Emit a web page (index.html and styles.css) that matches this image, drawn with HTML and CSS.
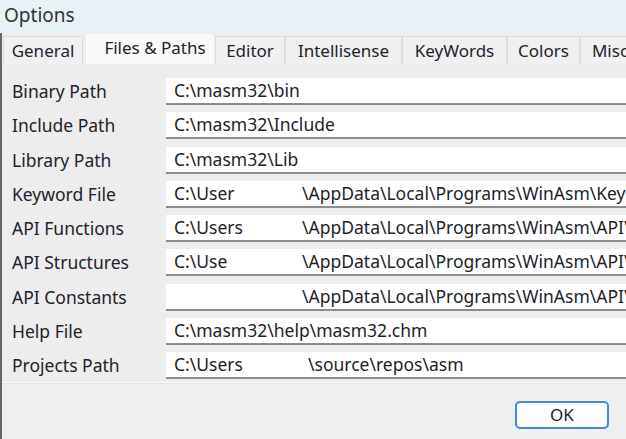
FILE: index.html
```html
<!DOCTYPE html>
<html>
<head>
<meta charset="utf-8">
<title>Options</title>
<link rel="stylesheet" href="styles.css">
</head>
<body>
<div class="titlebar">Options</div>
<div class="frame">
  <div class="tabs">
    <div class="tab t-general">General</div>
    <div class="tab t-files active">Files &amp; Paths</div>
    <div class="tab t-editor">Editor</div>
    <div class="tab t-intel">Intellisense</div>
    <div class="tab t-keys">KeyWords</div>
    <div class="tab t-colors">Colors</div>
    <div class="tab t-misc">Misc</div>
  </div>
  <div class="panel">
    <div class="label">Binary Path</div>
    <div class="field">C:\masm32\bin</div>
    <div class="label">Include Path</div>
    <div class="field">C:\masm32\Include</div>
    <div class="label">Library Path</div>
    <div class="field">C:\masm32\Lib</div>
    <div class="label">Keyword File</div>
    <div class="field"><span class="hidden-part">C:\User</span><span>\AppData\Local\Programs\WinAsm\KeyFile.ini</span></div>
    <div class="label">API Functions</div>
    <div class="field"><span class="hidden-part">C:\Users</span><span>\AppData\Local\Programs\WinAsm\API\apifunctions.txt</span></div>
    <div class="label">API Structures</div>
    <div class="field"><span class="hidden-part">C:\Use</span><span>\AppData\Local\Programs\WinAsm\API\apistructures.txt</span></div>
    <div class="label">API Constants</div>
    <div class="field"><span class="hidden-part"></span><span>\AppData\Local\Programs\WinAsm\API\apiconstants.txt</span></div>
    <div class="label">Help File</div>
    <div class="field">C:\masm32\help\masm32.chm</div>
    <div class="label">Projects Path</div>
    <div class="field"><span class="hidden-part wide">C:\Users</span><span>\source\repos\asm</span></div>
  </div>
  <div class="footer">
    <button class="ok">OK</button>
  </div>
</div>
</body>
</html>
```
FILE: styles.css
```css
html, body {
  margin: 0;
  padding: 0;
}
body {
  width: 626px;
  height: 439px;
  overflow: hidden;
  background: #efefef;
  font-family: "Noto Sans", "DejaVu Sans", sans-serif;
  color: #20202a;
}
.titlebar {
  height: 33px;
  line-height: 30px;
  padding-left: 4px;
  font-size: 19px;
  color: #333;
  background: #e6f2f5;
  box-sizing: border-box;
}
.frame {
  border-left: 2px solid #666;
  height: 406px;
  display: flex;
  flex-direction: column;
}
.tabs {
  height: 31px;
  display: flex;
  align-items: flex-end;
  padding-left: 1px;
  background: #ededed;
  white-space: nowrap;
}
.tab {
  flex: none;
  height: 28px;
  line-height: 28px;
  font-size: 17px;
  text-align: center;
  background: #f0f0f0;
  border: 1px solid #dedede;
  border-bottom: none;
  box-sizing: border-box;
  color: #22222e;
}
.tab.active {
  height: 31px;
  line-height: 27px;
  background: #f9f9f9;
  border-color: #ececec;
  padding-left: 10px;
  margin-left: 2px;
}
.t-general { width: 80px; }
.t-files { width: 130px; }
.t-editor { width: 70px; }
.t-intel { width: 117px; }
.t-keys { width: 105px; }
.t-colors { width: 73px; }
.t-misc { width: 60px; }
.panel {
  height: 319px;
  box-sizing: border-box;
  padding: 14px 0 0 10px;
  background: #ededed;
  border-bottom: 1px solid #fafafa;
  display: grid;
  grid-template-columns: 154px 470px;
  grid-auto-rows: 27px;
  row-gap: 7.25px;
  overflow: hidden;
}
.label {
  font-size: 17.5px;
  line-height: 27px;
  white-space: nowrap;
  color: #22222c;
}
.field {
  background: #ffffff;
  border-bottom: 2px solid #8c8c8c;
  height: 27px;
  box-sizing: border-box;
  padding-left: 8px;
  font-size: 17.5px;
  line-height: 24px;
  white-space: nowrap;
  overflow: hidden;
  color: #1e1e28;
}
.hidden-part {
  display: inline-block;
  width: 128px;
}
.hidden-part.wide {
  width: 134px;
}
.footer {
  flex: 1;
  border-top: 1px solid #e2e2e2;
  background: #efefef;
  display: flex;
  justify-content: flex-end;
  align-items: flex-start;
  padding: 17px 17px 0 0;
}
.ok {
  width: 94px;
  height: 28px;
  border: 2px solid #4a87d6;
  border-radius: 5px;
  background: #fdfdfd;
  font-family: "Noto Sans", "DejaVu Sans", sans-serif;
  font-size: 17px;
  line-height: 22px;
  color: #22222c;
  padding: 0;
}
```
